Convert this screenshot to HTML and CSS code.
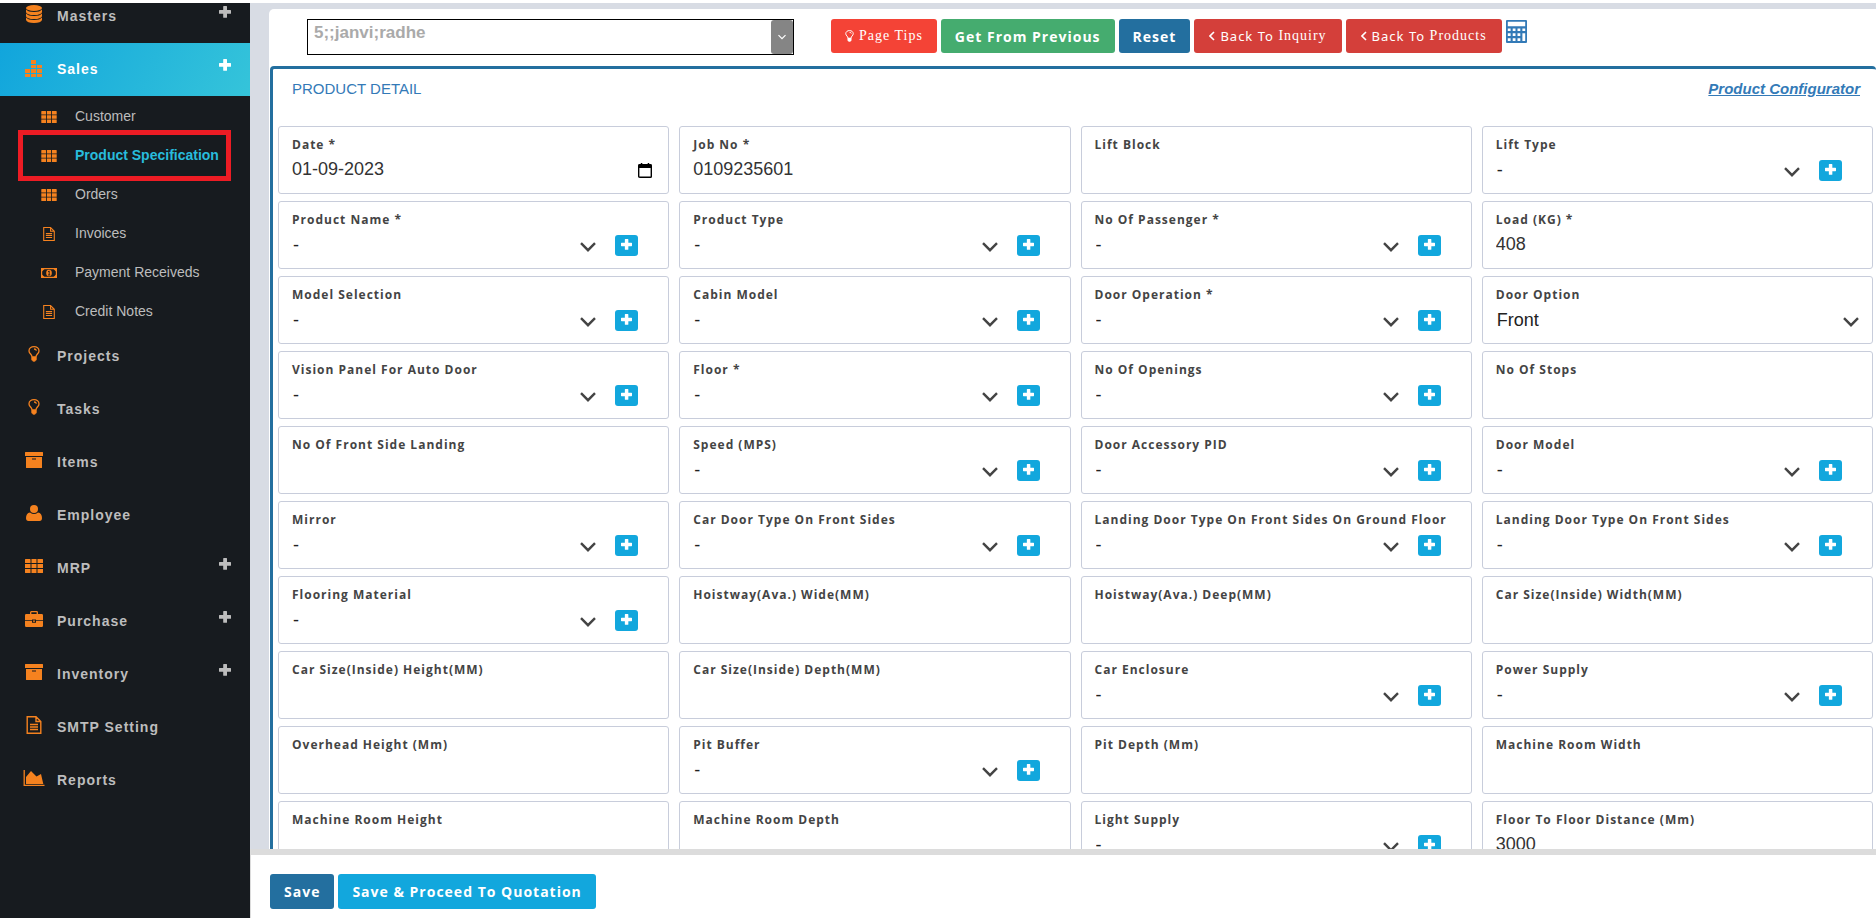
FILE: index.html
```html
<!DOCTYPE html>
<html lang="en">
<head>
<meta charset="utf-8">
<title>Product Specification</title>
<link rel="stylesheet" href="styles.css">
</head>
<body>
<svg class="sprite" aria-hidden="true">
  <symbol id="plus" viewBox="0 0 12 12"><path fill="currentColor" d="M4.800 0h2.600q.6 0 .6.6V4h3.400q.6 0 .6.6v2.600q0 .6-.6.6H8v3.400q0 .6-.6.6H4.800q-.6 0-.6-.6V7.800H.6q-.6 0-.6-.6V4.600Q0 4 .6 4h3.600V.6q0-.6.6-.6z"/></symbol>
  <symbol id="chevron" viewBox="0 0 16 10"><path fill="none" stroke="currentColor" stroke-width="2.4" d="M1 1.200l7 7 7-7"/></symbol>
  <symbol id="database" viewBox="0 0 16 18"><g fill="currentColor"><ellipse cx="8" cy="3" rx="8" ry="3"/><path d="M0 4.500q2 2.500 8 2.500t8-2.500v2.700q-1 2.800-8 2.800T0 7.200zM0 8.600q2 2.500 8 2.500t8-2.500v2.600q-1 2.800-8 2.800t-8-2.800zM0 12.600q2 2.500 8 2.500t8-2.500v2.400q-1 3-8 3t-8-3z"/></g></symbol>
  <symbol id="bars" viewBox="0 0 17 17"><g fill="currentColor"><path d="M0 14h5v3H0zM6 14h5v3H6zM12 14h5v3h-5zM0 9h5v4H0zM6 9h5v4H6zM12 9h5v4h-5zM6 5h5v3H6zM12 5h5v3h-5zM6 0h5v4H6z"/></g></symbol>
  <symbol id="grid" viewBox="0 0 18 14"><path fill="currentColor" d="M.6 0h4.300q.6 0 .6.6V4H0V.6Q0 0 .6 0zM6.500 0h5v4h-5zM12.500 0h4.900q.6 0 .6.6V4h-5.500zM0 5h5.500v4H0zM6.500 5h5v4h-5zM12.500 5H18v4h-5.500zM0 10h5.500v4H.6q-.6 0-.6-.6zM6.500 10h5v4h-5zM12.500 10H18v3.400q0 .6-.6.6h-4.900z"/></symbol>
  <symbol id="file" viewBox="0 0 16 18"><path fill="none" stroke="currentColor" stroke-width="1.400" d="M10 .7H1.200v16.600h13.600V5.500zM10 .7v4.800h4.800M4 8.500h8M4 11h8M4 13.500h8"/></symbol>
  <symbol id="money" viewBox="0 0 16 10"><path fill="none" stroke="currentColor" stroke-width="1.200" d="M.6.6h14.800v8.800H.6z"/><path fill="currentColor" d="M1 1h2.500L1 3.500zM15 1h-2.500L15 3.500zM1 9h2.500L1 6.500zM15 9h-2.500L15 6.500z"/><ellipse cx="8" cy="5" rx="2.800" ry="3.300" fill="currentColor"/><path d="M7 3.800l1.200-.8v4M7 7h2.200" fill="none" stroke="#171b1f" stroke-width=".9"/></symbol>
  <symbol id="bulb" viewBox="0 0 12 16"><path fill="none" stroke="currentColor" stroke-width="1.300" d="M4 10.800C4 8.500 1 7.500 1 4.900 1 2.400 3.300.7 6 .7s5 1.700 5 4.200c0 2.600-3 3.600-3 5.900M6 3q2 0 2.400 1.700"/><path fill="currentColor" d="M3.300 10.300h5.400v3.200q0 .8-.9 1-.5 1.300-1.800 1.300t-1.800-1.300q-.9-.2-.9-1z"/></symbol>
  <symbol id="archive" viewBox="0 0 18 16"><path fill="currentColor" fill-rule="evenodd" d="M.5 0h17q.5 0 .5.500V4H0V.5Q0 0 .5 0zM1 5h16v10.500q0 .5-.5.500h-15q-.5 0-.5-.5zM7 6.400v1.200h4V6.400z"/></symbol>
  <symbol id="user" viewBox="0 0 16 16"><circle cx="8" cy="4" r="4" fill="currentColor"/><path fill="currentColor" d="M4 7.400q4 3.200 8 0 4 .6 4 5.600 0 3-2.500 3h-11Q0 16 0 13q0-5 4-5.600z"/></symbol>
  <symbol id="case" viewBox="0 0 18 16"><path fill="none" stroke="currentColor" stroke-width="1.300" d="M5.700 3V1.300q0-.6.6-.6h5.400q.6 0 .6.600V3"/><path fill="currentColor" d="M1.200 3h15.600Q18 3 18 4.200V9h-7V8.600H7V9H0V4.200Q0 3 1.200 3zM0 9.800h7v2h4v-2h7v5q0 1.200-1.200 1.200H1.200Q0 16 0 14.800zM8 9.500h2v1.300H8z"/></symbol>
  <symbol id="area" viewBox="0 0 21 16"><path fill="none" stroke="currentColor" stroke-width="1.300" d="M.7 0v15.300H21"/><path fill="currentColor" d="M2.500 14V7l5-6 5.500 5.500L17.500 4l2.300 10z"/></symbol>
  <symbol id="calendar" viewBox="0 0 14 16"><path d="M1.500 1h1.300V0h1.500v1h5.400V0h1.500v1h1.300q1.500 0 1.500 1.400v11.100q0 1.500-1.500 1.500h-10Q0 15 0 13.500V2.400Q0 1 1.500 1zM1.400 5v8.600h11.200V5z" fill="#000" fill-rule="evenodd"/></symbol>
  <symbol id="calc" viewBox="0 0 21 23"><path fill="currentColor" fill-rule="evenodd" d="M1 0h19q1 0 1 1v21q0 1-1 1H1q-1 0-1-1V1q0-1 1-1zM1.800 1.800v4.400h17.400V1.800zM1.800 8.500v2.600h2.800V8.500zM6.700 8.500v2.600h2.800V8.500zM11.500 8.500v2.600h2.800V8.500zM16.400 8.500v2.600h2.800V8.500zM1.800 13.300v2.600h2.800v-2.600zM6.700 13.300v2.600h2.800v-2.600zM11.500 13.300v2.600h2.800v-2.600zM16.400 13.300v7.700h2.800v-7.700zM1.800 18.300v2.700h2.800v-2.700zM6.700 18.300v2.700h2.800v-2.700zM11.500 18.300v2.700h2.800v-2.700z"/></symbol>
  <symbol id="left" viewBox="0 0 6 10"><path fill="none" stroke="currentColor" stroke-width="1.600" d="M5 1L1 5l4 4"/></symbol>
</svg>

<div class="app">
  <nav class="sidebar">
    <ul class="menu">
      <li><a class="item" href="#"><svg class="icon database"><use href="#database"/></svg><span>Masters</span><svg class="more"><use href="#plus"/></svg></a></li>
      <li><a class="item current" href="#"><svg class="icon bars"><use href="#bars"/></svg><span>Sales</span><svg class="more"><use href="#plus"/></svg></a>
        <ul class="submenu">
          <li><a class="sub" href="#"><svg class="subicon"><use href="#grid"/></svg>Customer</a></li>
          <li><a class="sub active" href="#"><svg class="subicon"><use href="#grid"/></svg>Product Specification</a></li>
          <li><a class="sub" href="#"><svg class="subicon"><use href="#grid"/></svg>Orders</a></li>
          <li><a class="sub" href="#"><svg class="subicon doc"><use href="#file"/></svg>Invoices</a></li>
          <li><a class="sub" href="#"><svg class="subicon"><use href="#money"/></svg>Payment Receiveds</a></li>
          <li><a class="sub" href="#"><svg class="subicon doc"><use href="#file"/></svg>Credit Notes</a></li>
        </ul>
      </li>
      <li><a class="item" href="#"><svg class="icon"><use href="#bulb"/></svg><span>Projects</span></a></li>
      <li><a class="item" href="#"><svg class="icon"><use href="#bulb"/></svg><span>Tasks</span></a></li>
      <li><a class="item" href="#"><svg class="icon"><use href="#archive"/></svg><span>Items</span></a></li>
      <li><a class="item" href="#"><svg class="icon"><use href="#user"/></svg><span>Employee</span></a></li>
      <li><a class="item" href="#"><svg class="icon"><use href="#grid"/></svg><span>MRP</span><svg class="more"><use href="#plus"/></svg></a></li>
      <li><a class="item" href="#"><svg class="icon"><use href="#case"/></svg><span>Purchase</span><svg class="more"><use href="#plus"/></svg></a></li>
      <li><a class="item" href="#"><svg class="icon"><use href="#archive"/></svg><span>Inventory</span><svg class="more"><use href="#plus"/></svg></a></li>
      <li><a class="item" href="#"><svg class="icon tall"><use href="#file"/></svg><span>SMTP Setting</span></a></li>
      <li><a class="item" href="#"><svg class="icon wide"><use href="#area"/></svg><span>Reports</span></a></li>
    </ul>
  </nav>

  <main class="main">
    <div class="scroll">
      <div class="page">
        <div class="toolbar">
          <div class="combo">
            <input type="text" aria-label="Inquiry" value="5;;janvi;radhe">
            <button type="button" aria-label="Open list"><svg><use href="#chevron"/></svg></button>
          </div>
          <div class="actions">
            <button type="button" class="btn tips"><svg class="tip"><use href="#bulb"/></svg>Page Tips</button>
            <button type="button" class="btn green">Get From Previous</button>
            <button type="button" class="btn blue">Reset</button>
            <button type="button" class="btn red"><svg class="back"><use href="#left"/></svg><span class="sans">Back To</span> Inquiry</button>
            <button type="button" class="btn red"><svg class="back"><use href="#left"/></svg><span class="sans">Back To</span> Products</button>
            <a class="calc" href="#" aria-label="Calculator"><svg><use href="#calc"/></svg></a>
          </div>
        </div>

        <section class="panel">
          <header class="head">
            <h2>PRODUCT DETAIL</h2>
            <a href="#">Product Configurator</a>
          </header>
          <form class="fields">
            <div class="cell"><label for="f1">Date *</label><div class="control date"><input id="f1" type="text" value="01-09-2023"><svg class="cal"><use href="#calendar"/></svg></div></div>
            <div class="cell"><label for="f2">Job No *</label><div class="control"><input id="f2" type="text" value="0109235601"></div></div>
            <div class="cell"><label for="f3">Lift Block</label><div class="control"><input id="f3" type="text"></div></div>
            <div class="cell"><label for="f4">Lift Type</label><div class="control"><div class="pick"><select id="f4"><option>-</option></select><svg><use href="#chevron"/></svg></div><button type="button" class="add" aria-label="Add"><svg><use href="#plus"/></svg></button></div></div>

            <div class="cell"><label for="f5">Product Name *</label><div class="control"><div class="pick"><select id="f5"><option>-</option></select><svg><use href="#chevron"/></svg></div><button type="button" class="add" aria-label="Add"><svg><use href="#plus"/></svg></button></div></div>
            <div class="cell"><label for="f6">Product Type</label><div class="control"><div class="pick"><select id="f6"><option>-</option></select><svg><use href="#chevron"/></svg></div><button type="button" class="add" aria-label="Add"><svg><use href="#plus"/></svg></button></div></div>
            <div class="cell"><label for="f7">No Of Passenger *</label><div class="control"><div class="pick"><select id="f7"><option>-</option></select><svg><use href="#chevron"/></svg></div><button type="button" class="add" aria-label="Add"><svg><use href="#plus"/></svg></button></div></div>
            <div class="cell"><label for="f8">Load (KG) *</label><div class="control"><input id="f8" type="text" value="408"></div></div>

            <div class="cell"><label for="f9">Model Selection</label><div class="control"><div class="pick"><select id="f9"><option>-</option></select><svg><use href="#chevron"/></svg></div><button type="button" class="add" aria-label="Add"><svg><use href="#plus"/></svg></button></div></div>
            <div class="cell"><label for="f10">Cabin Model</label><div class="control"><div class="pick"><select id="f10"><option>-</option></select><svg><use href="#chevron"/></svg></div><button type="button" class="add" aria-label="Add"><svg><use href="#plus"/></svg></button></div></div>
            <div class="cell"><label for="f11">Door Operation *</label><div class="control"><div class="pick"><select id="f11"><option>-</option></select><svg><use href="#chevron"/></svg></div><button type="button" class="add" aria-label="Add"><svg><use href="#plus"/></svg></button></div></div>
            <div class="cell"><label for="f12">Door Option</label><div class="control"><div class="pick"><select id="f12"><option>Front</option></select><svg><use href="#chevron"/></svg></div></div></div>

            <div class="cell"><label for="f13">Vision Panel For Auto Door</label><div class="control"><div class="pick"><select id="f13"><option>-</option></select><svg><use href="#chevron"/></svg></div><button type="button" class="add" aria-label="Add"><svg><use href="#plus"/></svg></button></div></div>
            <div class="cell"><label for="f14">Floor *</label><div class="control"><div class="pick"><select id="f14"><option>-</option></select><svg><use href="#chevron"/></svg></div><button type="button" class="add" aria-label="Add"><svg><use href="#plus"/></svg></button></div></div>
            <div class="cell"><label for="f15">No Of Openings</label><div class="control"><div class="pick"><select id="f15"><option>-</option></select><svg><use href="#chevron"/></svg></div><button type="button" class="add" aria-label="Add"><svg><use href="#plus"/></svg></button></div></div>
            <div class="cell"><label for="f16">No Of Stops</label><div class="control"><input id="f16" type="text"></div></div>

            <div class="cell"><label for="f17">No Of Front Side Landing</label><div class="control"><input id="f17" type="text"></div></div>
            <div class="cell"><label for="f18">Speed (MPS)</label><div class="control"><div class="pick"><select id="f18"><option>-</option></select><svg><use href="#chevron"/></svg></div><button type="button" class="add" aria-label="Add"><svg><use href="#plus"/></svg></button></div></div>
            <div class="cell"><label for="f19">Door Accessory PID</label><div class="control"><div class="pick"><select id="f19"><option>-</option></select><svg><use href="#chevron"/></svg></div><button type="button" class="add" aria-label="Add"><svg><use href="#plus"/></svg></button></div></div>
            <div class="cell"><label for="f20">Door Model</label><div class="control"><div class="pick"><select id="f20"><option>-</option></select><svg><use href="#chevron"/></svg></div><button type="button" class="add" aria-label="Add"><svg><use href="#plus"/></svg></button></div></div>

            <div class="cell"><label for="f21">Mirror</label><div class="control"><div class="pick"><select id="f21"><option>-</option></select><svg><use href="#chevron"/></svg></div><button type="button" class="add" aria-label="Add"><svg><use href="#plus"/></svg></button></div></div>
            <div class="cell"><label for="f22">Car Door Type On Front Sides</label><div class="control"><div class="pick"><select id="f22"><option>-</option></select><svg><use href="#chevron"/></svg></div><button type="button" class="add" aria-label="Add"><svg><use href="#plus"/></svg></button></div></div>
            <div class="cell"><label for="f23">Landing Door Type On Front Sides On Ground Floor</label><div class="control"><div class="pick"><select id="f23"><option>-</option></select><svg><use href="#chevron"/></svg></div><button type="button" class="add" aria-label="Add"><svg><use href="#plus"/></svg></button></div></div>
            <div class="cell"><label for="f24">Landing Door Type On Front Sides</label><div class="control"><div class="pick"><select id="f24"><option>-</option></select><svg><use href="#chevron"/></svg></div><button type="button" class="add" aria-label="Add"><svg><use href="#plus"/></svg></button></div></div>

            <div class="cell"><label for="f25">Flooring Material</label><div class="control"><div class="pick"><select id="f25"><option>-</option></select><svg><use href="#chevron"/></svg></div><button type="button" class="add" aria-label="Add"><svg><use href="#plus"/></svg></button></div></div>
            <div class="cell"><label for="f26">Hoistway(Ava.) Wide(MM)</label><div class="control"><input id="f26" type="text"></div></div>
            <div class="cell"><label for="f27">Hoistway(Ava.) Deep(MM)</label><div class="control"><input id="f27" type="text"></div></div>
            <div class="cell"><label for="f28">Car Size(Inside) Width(MM)</label><div class="control"><input id="f28" type="text"></div></div>

            <div class="cell"><label for="f29">Car Size(Inside) Height(MM)</label><div class="control"><input id="f29" type="text"></div></div>
            <div class="cell"><label for="f30">Car Size(Inside) Depth(MM)</label><div class="control"><input id="f30" type="text"></div></div>
            <div class="cell"><label for="f31">Car Enclosure</label><div class="control"><div class="pick"><select id="f31"><option>-</option></select><svg><use href="#chevron"/></svg></div><button type="button" class="add" aria-label="Add"><svg><use href="#plus"/></svg></button></div></div>
            <div class="cell"><label for="f32">Power Supply</label><div class="control"><div class="pick"><select id="f32"><option>-</option></select><svg><use href="#chevron"/></svg></div><button type="button" class="add" aria-label="Add"><svg><use href="#plus"/></svg></button></div></div>

            <div class="cell"><label for="f33">Overhead Height (Mm)</label><div class="control"><input id="f33" type="text"></div></div>
            <div class="cell"><label for="f34">Pit Buffer</label><div class="control"><div class="pick"><select id="f34"><option>-</option></select><svg><use href="#chevron"/></svg></div><button type="button" class="add" aria-label="Add"><svg><use href="#plus"/></svg></button></div></div>
            <div class="cell"><label for="f35">Pit Depth (Mm)</label><div class="control"><input id="f35" type="text"></div></div>
            <div class="cell"><label for="f36">Machine Room Width</label><div class="control"><input id="f36" type="text"></div></div>

            <div class="cell"><label for="f37">Machine Room Height</label><div class="control"><input id="f37" type="text"></div></div>
            <div class="cell"><label for="f38">Machine Room Depth</label><div class="control"><input id="f38" type="text"></div></div>
            <div class="cell"><label for="f39">Light Supply</label><div class="control"><div class="pick"><select id="f39"><option>-</option></select><svg><use href="#chevron"/></svg></div><button type="button" class="add" aria-label="Add"><svg><use href="#plus"/></svg></button></div></div>
            <div class="cell"><label for="f40">Floor To Floor Distance (Mm)</label><div class="control"><input id="f40" type="text" value="3000"></div></div>
          </form>
        </section>
      </div>
    </div>
    <footer class="footer">
      <button type="button" class="btn blue">Save</button>
      <button type="button" class="btn cyan">Save &amp; Proceed To Quotation</button>
    </footer>
  </main>
</div>
</body>
</html>
```
FILE: styles.css
```css
* { box-sizing: border-box; }

body {
  margin: 0;
  background: #fff;
  font-family: "Liberation Sans", Arial, sans-serif;
  font-size: 14px;
  color: #333;
}

ul { list-style: none; margin: 0; padding: 0; }
a { text-decoration: none; }
button, input, select { font: inherit; margin: 0; }
svg { display: block; flex: none; }
.sprite { display: none; }

.app {
  display: flex;
  height: 100vh;
  padding-top: 3px;
}

/* Sidebar */
.sidebar {
  flex: none;
  width: 250px;
  overflow: hidden;
  background: #171b1f;
}
.menu { margin-top: -13px; }

.item {
  display: flex;
  align-items: center;
  height: 53px;
  padding: 0 19px 2px 23px;
  color: #bdbdbd;
  font-weight: bold;
  letter-spacing: 1px;
}
.item span { flex: 1; padding-left: 12px; }
.icon {
  width: 18px;
  height: 16px;
  margin: 0 2px 4px;
  color: #f5821f;
}
.icon.tall { height: 18px; }
.icon.wide { width: 22px; margin: 0 0 4px; }
.icon.database { height: 18px; }
.icon.bars { width: 17px; height: 17px; margin: 0 3px 0 2px; }
.more { width: 12px; height: 12px; margin-bottom: 8px; }
.item.current {
  background: linear-gradient(120deg, #11a5dc, #35c4da);
  color: #fff;
}

.sub {
  position: relative;
  display: flex;
  align-items: center;
  gap: 18px;
  height: 39px;
  padding-left: 41px;
  color: #bdbdbd;
}
.subicon { width: 16px; height: 12px; margin-top: 3px; color: #f5821f; }
.subicon.doc { height: 14px; }
.sub.active { color: #28bcdc; font-weight: bold; }
.sub.active::after {
  content: "";
  position: absolute;
  inset: -5px 19px -7px 18px;
  border: 5px solid #ed1c24;
}

/* Main column */
.main {
  flex: 1;
  min-width: 0;
  display: flex;
  flex-direction: column;
}
.scroll {
  flex: 1;
  min-height: 0;
  overflow: hidden;
  padding: 6px 0 0 19px;
  background: #d8dce4;
}
.page {
  padding-left: 1px;
  background: #fff;
  border-radius: 5px 0 0 0;
}

.toolbar {
  display: flex;
  align-items: flex-start;
  gap: 37px;
  padding: 10px 0 11px 37px;
}
.combo {
  display: flex;
  width: 487px;
  height: 36px;
  border: 1px solid #000;
}
.combo input {
  flex: 1;
  min-width: 0;
  padding: 0 6px 8px;
  border: 0;
  color: #aaa;
  font-size: 17px;
  font-weight: bold;
}
.combo button {
  display: flex;
  align-items: center;
  justify-content: center;
  width: 22px;
  padding: 0;
  border: 0;
  border-radius: 3px;
  background: #858585;
  color: #fff;
}
.combo svg { width: 8px; height: 6px; }

.actions { display: flex; align-items: flex-start; gap: 4px; }
.btn {
  display: flex;
  align-items: center;
  height: 34px;
  padding: 0 14px;
  border: 0;
  border-radius: 3px;
  color: #fff;
  font: bold 14px "Open Sans", sans-serif;
  letter-spacing: 1px;
  white-space: pre;
}
.btn.green { background: #45ac6f; }
.btn.blue { background: #236f9f; }
.btn.cyan { background: #12a7dd; }
.btn.tips, .btn.red {
  font-family: "Liberation Serif", serif;
  font-weight: normal;
}
.btn.tips { background: #f44336; }
.btn.red { padding: 0 15px; background: #d43f3a; }
.sans { font-family: "Noto Sans", sans-serif; font-size: 13px; }
.tip { width: 9px; height: 12px; margin-right: 5px; }
.back { width: 6px; height: 10px; margin-right: 5px; }
.calc { color: #337ab7; }
.calc svg { width: 21px; height: 25px; }

/* Panel */
.panel {
  padding: 0 3px 12px 5px;
  border-top: 3px solid #236f9f;
  border-left: 3px solid #236f9f;
  border-radius: 4px 4px 0 0;
}
.head {
  display: flex;
  align-items: center;
  justify-content: space-between;
  height: 57px;
  padding: 0 13px 18px 14px;
  color: #337ab7;
}
.head h2 { margin: 0; font-size: 15px; font-weight: normal; }
.head a {
  color: #337ab7;
  font-size: 15px;
  font-style: italic;
  font-weight: bold;
  text-decoration: underline;
}

.fields {
  display: grid;
  grid-template-columns: repeat(4, minmax(0, 1fr));
  gap: 7px 10px;
}
.cell {
  height: 68px;
  padding: 9px 13px 0;
  border: 1px solid #c8cddb;
  border-radius: 3px;
}
.cell label {
  display: block;
  color: #444;
  font: bold 12px/18px "Open Sans", sans-serif;
  letter-spacing: 1px;
  white-space: nowrap;
}
.control {
  display: flex;
  align-items: center;
  height: 33px;
}
.control input {
  flex: 1;
  min-width: 0;
  height: 33px;
  padding: 0 0 3px;
  border: 0;
  outline: 0;
  background: none;
  color: #333;
  font-size: 18px;
}
.cal { width: 14px; height: 16px; margin-right: 3px; }
.pick {
  flex: 1;
  display: grid;
  align-items: center;
}
.pick > * { grid-area: 1 / 1; }
.pick select {
  width: 100%;
  height: 33px;
  padding: 0 0 2px 1px;
  border: 0;
  appearance: none;
  background: none;
  color: #222;
  font-size: 18px;
}
.pick svg {
  justify-self: end;
  width: 16px;
  height: 10px;
  margin-top: 3px;
  color: #444;
  pointer-events: none;
}
.add {
  display: flex;
  align-items: center;
  justify-content: center;
  width: 23px;
  height: 21px;
  margin: 0 17px 0 19px;
  padding: 0 0 2px;
  border: 0;
  border-radius: 3px;
  background: #12a7dd;
  color: #fff;
}
.add svg { width: 11px; height: 11px; }

/* Footer */
.footer {
  display: flex;
  gap: 4px;
  padding: 19px 0 9px 19px;
  border-top: 6px solid #dcdcdc;
  border-left: 1px solid #dcdcdc;
  background: #fff;
}
.footer .btn { height: 35px; }
```
